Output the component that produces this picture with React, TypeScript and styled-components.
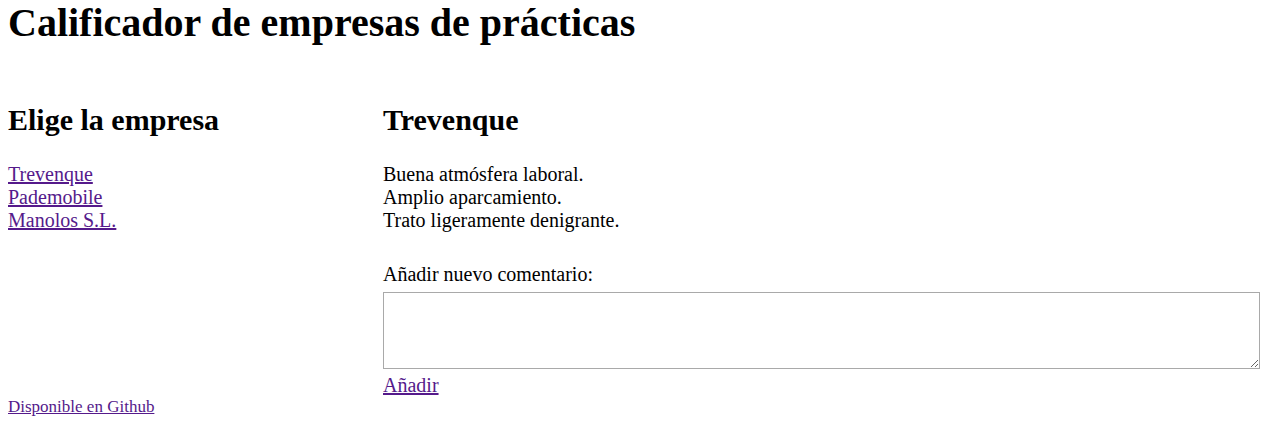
import styled, { createGlobalStyle } from 'styled-components';

const GlobalStyle = createGlobalStyle`
  body {
    margin: 0;
    background: #fff;
    color: #000;
    font-family: "Liberation Serif", "Times New Roman", serif;
    font-size: 20px;
  }
`;

const Page = styled.div`
  padding: 0 8px;
`;

const Title = styled.h1`
  margin: 0;
  font-size: 40px;
  line-height: 46px;
  font-weight: bold;
`;

const Columns = styled.div`
  display: grid;
  grid-template-columns: 375px 1fr;
  margin-top: 57px;
`;

const Column = styled.div`
  display: flex;
  flex-direction: column;
  align-items: flex-start;
`;

const Subtitle = styled.h2`
  margin: 0 0 26px;
  font-size: 30px;
  line-height: 34px;
  font-weight: bold;
`;

const Link = styled.a`
  color: #551a8b;
  text-decoration: underline;
  line-height: 23px;
  cursor: pointer;
`;

const Comment = styled.div`
  line-height: 23px;
`;

const Label = styled.label`
  margin-top: 31px;
  line-height: 23px;
`;

const TextArea = styled.textarea`
  box-sizing: border-box;
  width: calc(100% - 2px);
  height: 77px;
  margin: 6px 0 5px;
  border: 1px solid #a9a9a9;
  padding: 2px;
  font-family: "Liberation Mono", monospace;
  font-size: 13px;
`;

const Footer = styled.div`
  margin-top: -2px;
  font-size: 17px;
`;

const empresas = ['Trevenque', 'Pademobile', 'Manolos S.L.'];
const comentarios = [
  'Buena atmósfera laboral.',
  'Amplio aparcamiento.',
  'Trato ligeramente denigrante.',
];

export default function App() {
  return (
    <Page>
      <GlobalStyle />
      <Title>Calificador de empresas de prácticas</Title>
      <Columns>
        <Column>
          <Subtitle>Elige la empresa</Subtitle>
          {empresas.map((e) => (
            <Link key={e} href="#">{e}</Link>
          ))}
        </Column>
        <Column>
          <Subtitle>Trevenque</Subtitle>
          {comentarios.map((c) => (
            <Comment key={c}>{c}</Comment>
          ))}
          <Label htmlFor="comentario">Añadir nuevo comentario:</Label>
          <TextArea id="comentario" />
          <Link href="#">Añadir</Link>
        </Column>
      </Columns>
      <Footer>
        <Link href="#">Disponible en Github</Link>
      </Footer>
    </Page>
  );
}
